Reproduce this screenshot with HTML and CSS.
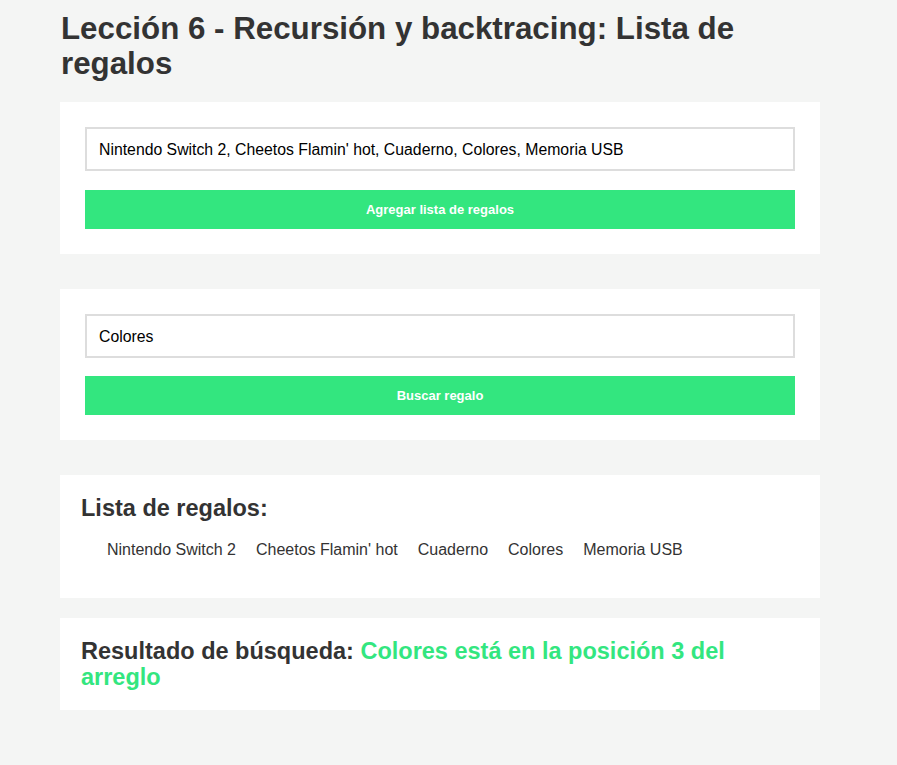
FILE: index.html
```html
<!DOCTYPE html>
<html lang="es">
<head>
<meta charset="UTF-8">
<meta name="viewport" content="width=device-width, initial-scale=1.0">
<title>Lista de regalos</title>
<link rel="stylesheet" href="styles.css">
</head>
<body>
<div class="wrapper">
    <h1>Lección 6 - Recursión y backtracing: Lista de regalos</h1>

    <div class="card form-card">
        <input type="text" id="giftsInput" value="Nintendo Switch 2, Cheetos Flamin' hot, Cuaderno, Colores, Memoria USB">
        <button id="addGifts">Agregar lista de regalos</button>
    </div>

    <div class="card form-card search-card">
        <input type="text" id="searchInput" value="Colores">
        <button id="searchGift">Buscar regalo</button>
    </div>

    <div class="card list-card">
        <h2>Lista de regalos:</h2>
        <ul id="giftList">
            <li>Nintendo Switch 2</li>
            <li>Cheetos Flamin' hot</li>
            <li>Cuaderno</li>
            <li>Colores</li>
            <li>Memoria USB</li>
        </ul>
    </div>

    <div class="card result-card">
        <h2>Resultado de búsqueda: <span id="result">Colores está en la posición 3 del arreglo</span></h2>
    </div>
</div>
</body>
</html>
```

FILE: styles.css
```css
body {
    font-family: 'Liberation Sans', Arial, sans-serif;
    background-color: #f4f5f4;
    color: #333;
    margin: 0;
}

.wrapper {
    width: 760px;
    margin: 0 60px;
    padding-bottom: 40px;
}

h1 {
    font-size: 31.3px;
    line-height: 35px;
    font-weight: bold;
    margin: 11px 0 21px 1px;
}

.card {
    background: white;
}

.form-card {
    display: flex;
    flex-direction: column;
    gap: 19px;
    padding: 25px;
    margin-bottom: 35px;
}

.search-card {
    gap: 18px;
}

.form-card input {
    height: 44px;
    box-sizing: border-box;
    border: 2px solid #ddd;
    padding: 1px 12px 0;
    font-family: 'Liberation Sans', Arial, sans-serif;
    font-size: 15.8px;
    color: #000;
    outline: none;
}

.form-card button {
    height: 39px;
    border: none;
    background-color: #33e67f;
    color: white;
    font-family: 'Liberation Sans', Arial, sans-serif;
    font-size: 13px;
    font-weight: bold;
    cursor: pointer;
}

h2 {
    font-size: 23.5px;
    line-height: 26px;
    margin: 0;
}

.list-card {
    padding: 20px 20px 20px 21px;
    margin-bottom: 20px;
}

.list-card h2 {
    line-height: 27px;
}

.list-card ul {
    list-style: none;
    display: flex;
    gap: 20px;
    margin: 19px 0 19px;
    padding-left: 26px;
    font-size: 16px;
    line-height: 18px;
}

.result-card {
    padding: 20px 60px 20px 21px;
}

#result {
    color: #33e67f;
}
```
